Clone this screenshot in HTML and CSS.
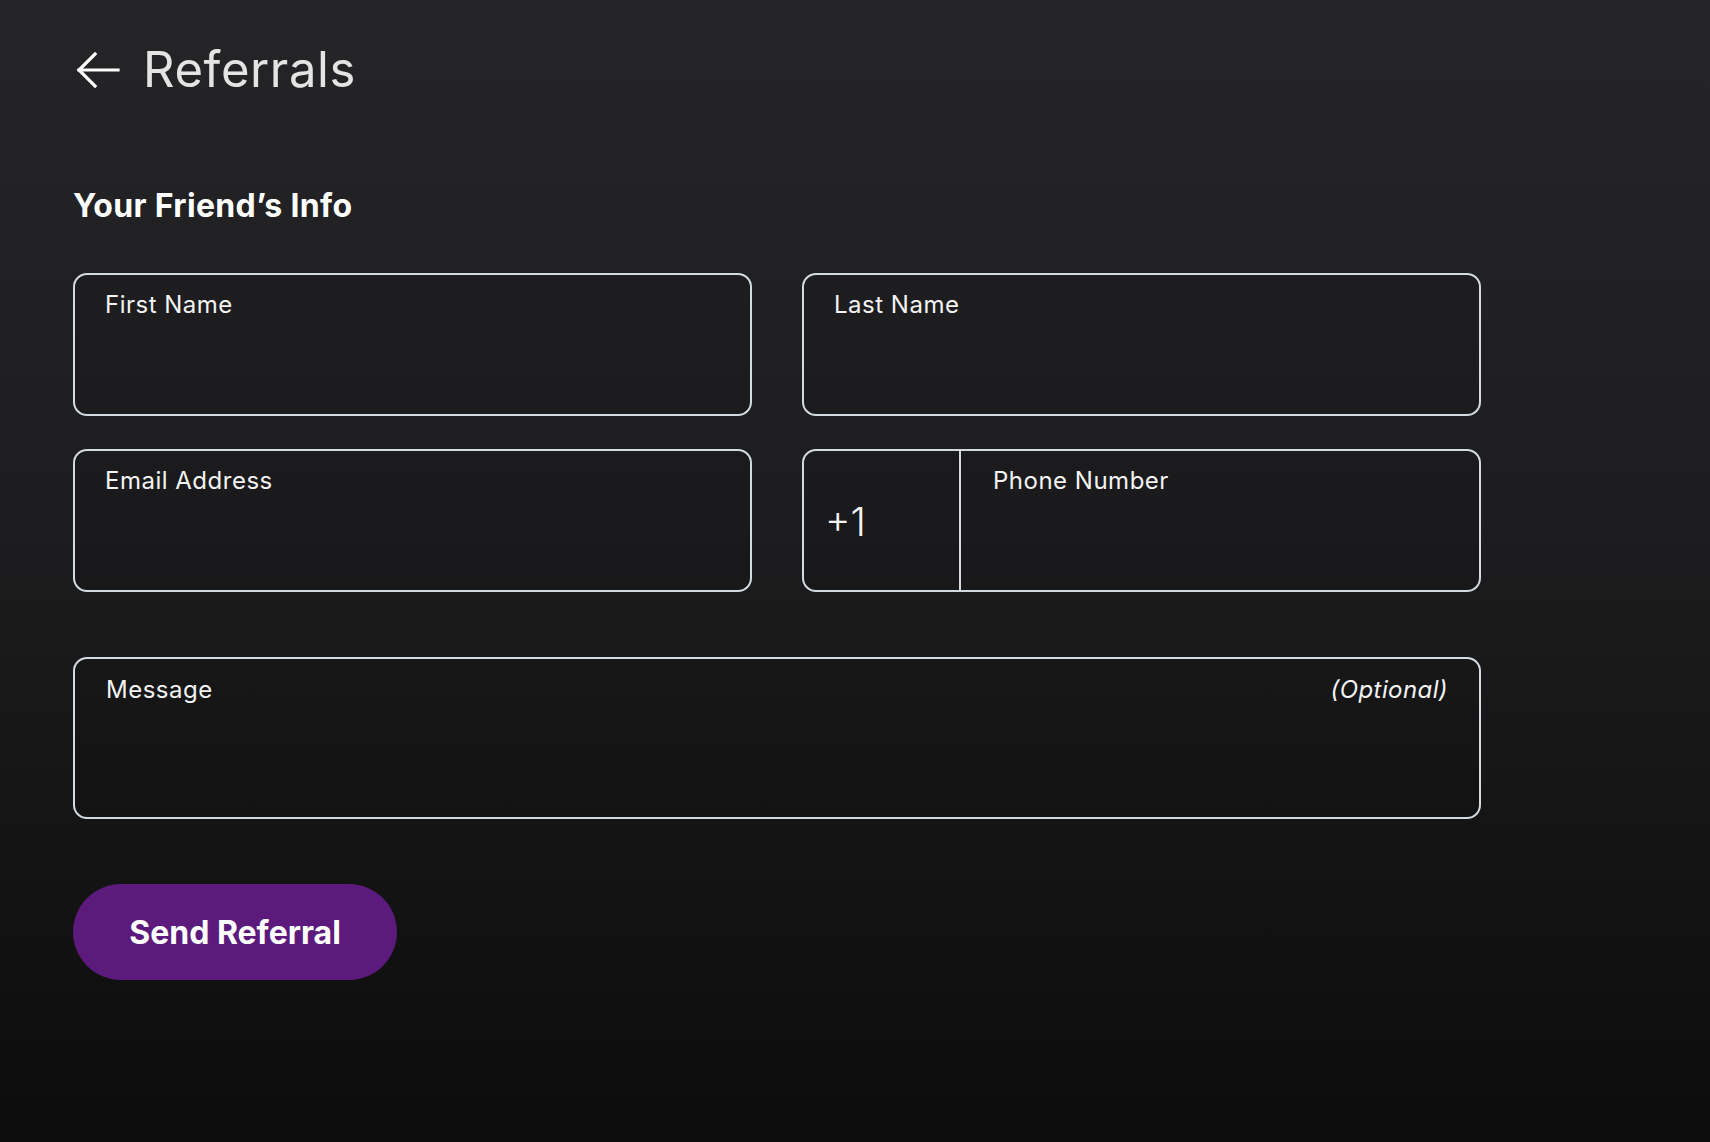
FILE: index.html
```html
<!DOCTYPE html>
<html lang="en">
<head>
<meta charset="utf-8">
<title>Referrals</title>
<link rel="stylesheet" href="styles.css">
</head>
<body>
<main class="page">
  <header class="topbar">
    <button class="back" aria-label="Back">
      <svg width="44" height="36" viewBox="0 0 44 36" fill="none" stroke="#ffffff" stroke-width="3.2" stroke-linecap="square">
        <path d="M3 18 H42"/>
        <path d="M19 2 L3 18 L19 34"/>
      </svg>
    </button>
    <h1 class="title">Referrals</h1>
  </header>

  <h2 class="section-title">Your Friend’s Info</h2>

  <form class="form">
    <div class="grid">
      <label class="field">
        <span class="field-label">First Name</span>
        <input class="field-input" type="text">
      </label>
      <label class="field">
        <span class="field-label">Last Name</span>
        <input class="field-input" type="text">
      </label>
      <label class="field">
        <span class="field-label">Email Address</span>
        <input class="field-input" type="email">
      </label>
      <div class="field phone">
        <div class="prefix">+1</div>
        <label class="phone-main">
          <span class="field-label">Phone Number</span>
          <input class="field-input" type="tel">
        </label>
      </div>
    </div>

    <label class="field message">
      <span class="message-head">
        <span class="field-label">Message</span>
        <span class="optional">(Optional)</span>
      </span>
      <textarea class="field-input area"></textarea>
    </label>

    <button type="button" class="submit">Send Referral</button>
  </form>
</main>
</body>
</html>
```

FILE: styles.css
```css
* { box-sizing: border-box; }

html, body {
  margin: 0;
  padding: 0;
}

body {
  min-height: 100vh;
  background: linear-gradient(180deg, #252528 0%, #1d1d1f 45%, #0c0c0c 100%);
  font-family: Inter, "Noto Sans", "Liberation Sans", sans-serif;
  color: #f3f3f3;
}

.page {
  padding: 41px 0 60px 73px;
  width: 1481px;
}

.topbar {
  display: flex;
  align-items: center;
  gap: 23px;
  height: 58px;
}

.back {
  display: flex;
  align-items: center;
  background: none;
  border: 0;
  padding: 0;
  margin-left: 3px;
  cursor: pointer;
}

.title {
  margin: 0;
  font-size: 49px;
  line-height: 58px;
  font-weight: 400;
  color: #e4e4e4;
  letter-spacing: 0.6px;
}

.section-title {
  margin: 88px 0 0;
  font-size: 32px;
  line-height: 38px;
  font-weight: 700;
  letter-spacing: 0.35px;
  color: #ffffff;
}

.form {
  margin-top: 48px;
}

.grid {
  display: grid;
  grid-template-columns: 1fr 1fr;
  column-gap: 50px;
  row-gap: 33px;
}

.field {
  display: flex;
  flex-direction: column;
  height: 143px;
  border: 2px solid #d3dae0;
  border-radius: 14px;
  background: rgba(0, 0, 0, 0.08);
  padding: 15px 30px 0;
}

.field-label {
  font-size: 24px;
  line-height: 30px;
  font-weight: 400;
  letter-spacing: 0.5px;
  color: #f3f3f3;
}

.field-input {
  flex: 1;
  border: 0;
  background: transparent;
  outline: none;
  color: #ffffff;
  font: inherit;
  font-size: 22px;
}

.phone {
  flex-direction: row;
  padding: 0;
}

.prefix {
  width: 157px;
  flex: none;
  display: flex;
  align-items: center;
  padding-left: 21px;
  padding-top: 1px;
  border-right: 2px solid #d3dae0;
  font-size: 39px;
  font-weight: 300;
  color: #f5f5f5;
}

.phone-main {
  flex: 1;
  display: flex;
  flex-direction: column;
  padding: 15px 32px 0;
}

.message {
  margin-top: 65px;
  height: 162px;
  padding: 16px 31px 0 31px;
}

.message-head {
  display: flex;
  justify-content: space-between;
  align-items: baseline;
}

.optional {
  font-size: 24px;
  line-height: 30px;
  font-style: italic;
  letter-spacing: 0.4px;
  color: #f3f3f3;
}

.area {
  resize: none;
}

.submit {
  margin-top: 65px;
  width: 324px;
  height: 96px;
  border: 0;
  border-radius: 48px;
  background: #5c1a7c;
  color: #ffffff;
  font-family: Inter, "Noto Sans", "Liberation Sans", sans-serif;
  font-size: 32px;
  font-weight: 700;
  cursor: pointer;
}
```
